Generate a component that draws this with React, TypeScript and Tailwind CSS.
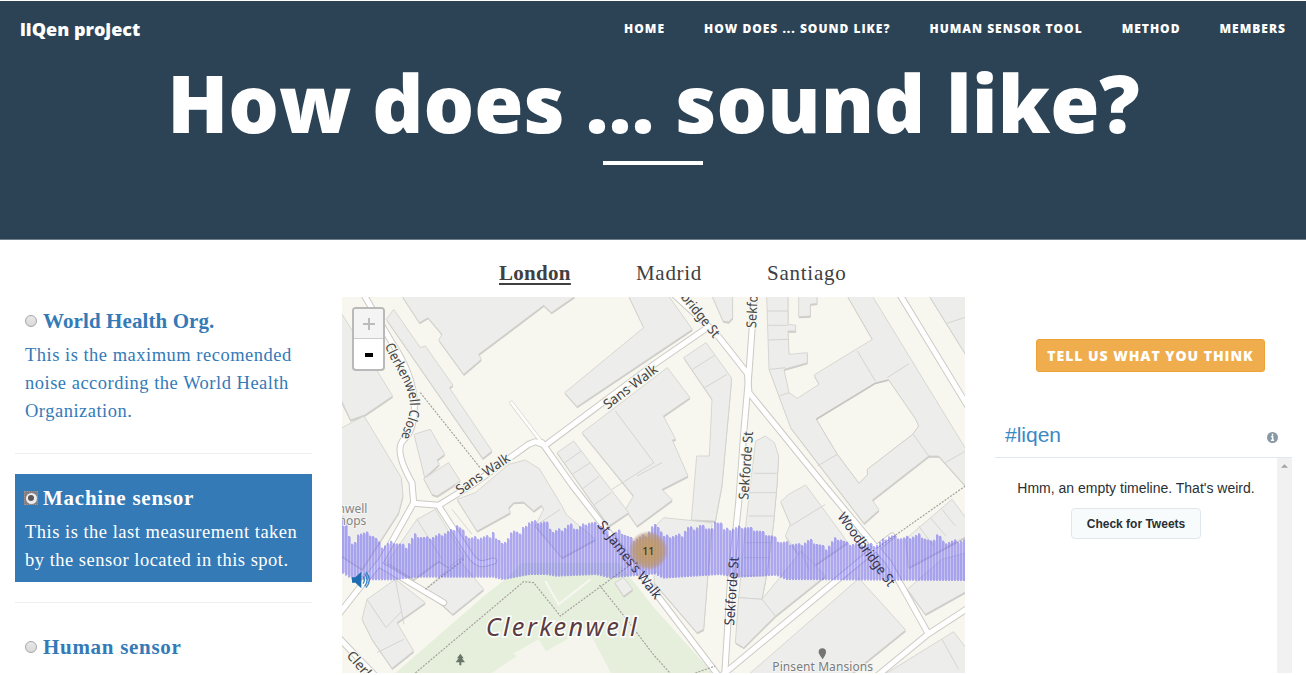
import React from "react";

const pts = {
  buildings: [
    "180,0 232,80 258,65 300,115 290,132 365,235 418,190 410,175 605,28 628,50 700,0",
    "860,0 905,95 668,290 705,332 1051,100 980,0",
    "133,70 155,40 235,155 250,150 333,268 322,275 450,465 422,487",
    "-9,40 152,300 68,357 25,372 -9,305",
    "-9,400 66,360 178,545 183,600 170,650 60,820 -9,775",
    "216,415 265,400 308,475 285,492 292,505 248,545",
    "245,548 320,500 355,555 285,600 270,595",
    "720,410 976,215 1044,305 964,360 1001,430 991,432 1038,540 960,580 991,612 885,690 850,640 875,600",
    "645,470 695,435 860,650 800,690",
    "400,590 500,505 550,492 592,518 660,630 672,655 760,730 660,785 580,690 605,640 598,628 575,645 545,618 515,620 500,635 505,650 405,705 345,610",
    "225,670 280,640 365,780 320,815 290,795 215,850 135,800",
    "250,880 350,790 425,880 332,955",
    "75,910 160,850 250,920 165,980 215,1065 150,1117 90,1030 60,970",
    "818,860 845,845 872,880 845,900",
    "1110,0 1172,0 1172,65 1160,78 1143,75",
    "1370,0 1425,0 1425,22 1405,25 1405,60 1370,62",
    "1762,0 1875,0 1875,182",
    "1025,185 1092,140 1168,245 1168,260 1140,567 1120,675 1048,672 1064,480 1102,480 1110,310",
    "1241,435 1270,420 1297,440 1310,480 1305,567 1295,680 1275,830 1260,910 1190,905 1210,700 1225,567",
    "940,690 965,665 1110,680 1085,1000 1065,1010 936,860",
    "1316,617 1340,595 1391,567 1500,715 1516,740 1400,820 1330,720 1345,685",
    "1190,905 1260,910 1378,765 1450,840 1300,960 1205,1055 1180,1040",
    "1215,1140 1551,847 1691,1002 1520,1140",
    "1696,880 1750,955 1875,885 1875,770 1800,790",
    "1690,730 1830,610 1875,670 1875,720 1700,815",
    "1620,1140 1835,1007 1875,1060 1875,1140",
    "1274,0 1338,0 1338,85 1361,88 1361,105 1338,105 1341,175 1396,170 1396,200 1326,220 1341,290 1366,307 1431,265 1416,237 1591,130 1516,0 1591,0 1875,465 1875,575 1790,480 1760,480 1591,612 1611,642 1566,682 1346,395 1281,220",
  ],
  courtyard:
    "1423,370 1600,262 1640,252 1720,368 1730,390 1712,415 1576,520 1576,537 1551,562 1486,475",
};

const partitions =
  "M668,500L718,465 M690,535L745,500 M722,578L772,540 M758,625L808,590 M1052,220L1118,178 M1088,275L1155,235 M1276,45H1338 M1276,88H1338 M1279,132L1340,130 M1283,220L1330,215 M1312,300L1341,290 M1546,165L1600,255 M1636,245L1701,203 M1714,415L1760,480 M1810,500L1869,466 M1426,510L1486,475 M820,345L936,500 M936,500L810,580 M885,540L960,500 M1236,532H1305 M1224,590H1304 M1220,660H1296 M1212,740H1288 M1206,785H1282 M1200,840H1272 M1815,82L1872,63 M75,910L132,995L180,945 M160,850L186,985 M105,1070L185,1030 M225,670L300,790 M1345,690L1450,625 M1400,820L1378,765 M1260,910L1300,960 M1730,690L1775,750 M1765,665L1812,720 M1800,640L1840,690 M1800,1030L1850,1120 M580,690L655,640 M330,640L390,715 M0,315L25,372";

const roads = [
  "M62,-10L150,140Q215,240 217,320T186,430T210,560L215,620L120,790L-10,955",
  "M215,622L290,628L400,560L560,445L580,437L610,448L936,205L1096,95",
  "M600,440L690,567L936,885L1130,1140",
  "M290,630L380,770Q400,805 425,803L455,795",
  "M112,805L305,920",
  "M990,-10L1120,110L1216,232L1221,290L1446,567L1640,800L1757,1010",
  "M1238,-10L1221,230L1206,400L1190,620L1165,860L1148,1140",
  "M1670,-10L1880,335",
  "M1140,1138L1576,777L1650,720",
  "M1600,1144L1757,1015L1880,935",
  "M-10,1025L110,1150",
];

const topKeys: [number, number][] = [
  [0, 100], [15, 110], [20, 180], [40, 175], [45, 145], [75, 145], [95, 155], [115, 185], [150, 170], [190, 185], [215, 150],
  [250, 160], [290, 150], [330, 135], [342, 120], [380, 160], [440, 155], [450, 140], [462, 170], [490, 170], [515, 130],
  [530, 150], [545, 122], [560, 110], [610, 112], [630, 140], [660, 132], [680, 118], [700, 132], [735, 112], [770, 118],
  [800, 150], [830, 138], [870, 165], [910, 150], [930, 122], [948, 122], [960, 155], [1020, 150], [1030, 128], [1055, 130],
  [1070, 122], [1112, 133], [1118, 107], [1134, 112], [1142, 135], [1200, 125], [1240, 135], [1290, 155], [1310, 170],
  [1370, 180], [1400, 165], [1450, 190], [1475, 162], [1490, 160], [1510, 175], [1600, 180], [1640, 152], [1680, 160],
  [1730, 150], [1765, 172], [1785, 143], [1800, 172], [1869, 165],
];
const bottomKeys: [number, number][] = [
  [0, 266], [30, 285], [150, 286], [220, 278], [450, 278], [480, 285], [560, 270], [610, 270], [640, 275], [760, 270],
  [800, 280], [936, 268], [960, 281], [1050, 275], [1130, 270], [1180, 278], [1300, 272], [1330, 285], [1869, 288],
];

function sample(keys: [number, number][], x: number) {
  for (let i = 1; i < keys.length; i++) {
    if (x <= keys[i][0]) {
      const [x0, y0] = keys[i - 1];
      const [x1, y1] = keys[i];
      return y0 + ((y1 - y0) * (x - x0)) / (x1 - x0);
    }
  }
  return keys[keys.length - 1][1];
}

const bars = Array.from({ length: 208 }, (_, i) => {
  const x = i * 9;
  const jitter = (i * 7) % 4;
  const top = 567 + sample(topKeys, x) + jitter * 3 - 5;
  return { x, top, h: 567 + sample(bottomKeys, x) - top };
});

type RoadLabelProps = { x: number; y: number; angle: number; length: number; children: string; end?: boolean };

function RoadLabel({ x, y, angle, length, children, end }: RoadLabelProps) {
  return (
    <text
      transform={`translate(${x} ${y}) rotate(${angle})`}
      textLength={length}
      lengthAdjust="spacingAndGlyphs"
      textAnchor={end ? "end" : "start"}
      className="fill-[#444444] stroke-[#f7f7f1] stroke-[7] text-[41px] [paint-order:stroke]"
    >
      {children}
    </text>
  );
}

function StreetMap() {
  return (
    <svg viewBox="0 3 1869 1128" className="block h-[376px] w-[623px] bg-[#f7f7ef] font-['Noto_Sans',sans-serif]">
      <defs>
        <radialGradient id="marker">
          <stop offset="0" stopColor="#c69a55" stopOpacity="0.9" />
          <stop offset="0.6" stopColor="#be9560" stopOpacity="0.8" />
          <stop offset="0.82" stopColor="#b8926c" stopOpacity="0.6" />
          <stop offset="1" stopColor="#b08c90" stopOpacity="0" />
        </radialGradient>
        <path id="close" d="M128,148C155,215 198,262 203,318S180,390 179,425" />
      </defs>
      <polygon points="150,1140 420,905 490,850 540,800 830,800 936,935 1120,1140" fill="#e6eedc" />
      <polygon points="435,1140 525,1080 513,1073 590,1030 612,1066 735,995 812,1140" fill="#f5f5ee" />
      <path d="M610,855L650,925L745,850" fill="none" stroke="#f5f7f0" strokeWidth="7" />
      {pts.buildings.map((p) => (
        <g key={p}>
          <polygon points={p} fill="#cdccc9" transform="translate(1 5)" />
          <polygon points={p} fill="#ededec" stroke="#d2d1cc" strokeWidth="2.5" />
        </g>
      ))}
      <polygon points={pts.courtyard} fill="#f7f7ef" stroke="#cfcec9" strokeWidth="3" />
      <path d="M1423,370L1600,262L1640,252" fill="none" stroke="#c6c5c1" strokeWidth="5" />
      <path d={partitions} fill="none" stroke="#d0cfcb" strokeWidth="2.5" />
      <g fill="none" strokeLinejoin="round" strokeLinecap="round">
        <path d="M508,320L600,440" stroke="#d4d3cc" strokeWidth="12" />
        {roads.map((d) => (
          <path key={d} d={d} stroke="#cbcac5" strokeWidth="21" />
        ))}
        <path d="M508,320L600,440" stroke="#ffffff" strokeWidth="8" />
        {roads.map((d) => (
          <path key={d} d={d} stroke="#ffffff" strokeWidth="15" />
        ))}
      </g>
      <g fill="none" stroke="#a5a09c" strokeWidth="3.5" strokeDasharray="6 4">
        <path d="M235,290L418,520" />
        <path d="M220,1131L545,857L575,860L655,960L860,810 M772,867L850,965L936,1078L1010,1160" />
        <path d="M1870,570L1600,760" />
        <path d="M250,880L365,790 M1060,1131L1120,1110" />
      </g>

      <g fill="#6258ee">
        {bars.map((b) => (
          <g key={b.x}>
            <rect x={b.x} y={b.top} width="6" height={b.h} fillOpacity="0.5" />
            <rect x={b.x + 6} y={b.top + 3} width="3" height={b.h - 6} fillOpacity="0.3" />
          </g>
        ))}
      </g>

      <RoadLabel x={797} y={341} angle={-37} length={192}>Sans Walk</RoadLabel>
      <RoadLabel x={353} y={597} angle={-34} length={186}>Sans Walk</RoadLabel>
      <RoadLabel x={1219} y={612} angle={-86} length={206}>Sekforde St</RoadLabel>
      <RoadLabel x={1242} y={97} angle={-87} length={206}>Sekforde St</RoadLabel>
      <RoadLabel x={1115} y={128} angle={51} length={262} end>Woodbridge St</RoadLabel>
      <g className="[&_text]:fill-[#33334f] [&_text]:stroke-0">
        <RoadLabel x={1176} y={989} angle={-86} length={206}>Sekforde St</RoadLabel>
        <RoadLabel x={1485} y={662} angle={54} length={262}>Woodbridge St</RoadLabel>
        <RoadLabel x={764} y={688} angle={52} length={285}>St James’s Walk</RoadLabel>
      </g>
      <RoadLabel x={12} y={1080} angle={49} length={98}>Clerk</RoadLabel>
      <text className="fill-[#444444] stroke-[#f7f7f1] stroke-[7] text-[41px] [paint-order:stroke]">
        <textPath href="#close" textLength="300" lengthAdjust="spacingAndGlyphs">
          Clerkenwell Close
        </textPath>
      </text>
      <g className="fill-[#858585] stroke-[#f4f4f2] stroke-[6] text-[36px] [paint-order:stroke]">
        <text x="76" y="650" textAnchor="end">nwell</text>
        <text x="73" y="688" textAnchor="end">hops</text>
        <text x="1291" y="1125" textLength="302" className="fill-[#7c7c7c]">Pinsent Mansions</text>
      </g>

      <circle cx="919" cy="764" r="60" fill="url(#marker)" />
      <text x="919" y="776" textAnchor="middle" className="fill-[#3c3434] text-[32px] font-medium">
        11
      </text>

      <text
        x="431"
        y="1021"
        textLength="453"
        className="fill-[#5b3c40] stroke-white stroke-[9] font-['Noto_Sans','Open_Sans',sans-serif] text-[76px] italic [paint-order:stroke]"
      >
        Clerkenwell
      </text>
      <path d="M355,1073l10,14h-5l9,12h-11v9h-6v-9h-11l9,-12h-5z" fill="#6a756a" />
      <path d="M1442,1090c-9,-14 -12,-17 -12,-22a11,11 0 0 1 22,0c0,5 -2,10 -10,22z" fill="#757575" />

      <g transform="translate(30 829)">
        <path d="M0,15h10l18,-17v50l-18,-17h-10z" fill="#1f6cb0" />
        <path d="M33,12q8,11 0,22 M38,4q15,19 0,38 M42,-1q20,24 0,47" fill="none" stroke="#3a86c4" strokeWidth="4" />
      </g>
    </svg>
  );
}

const serif = "font-['Liberation_Serif',serif]";

function Radio({ checked = false }: { checked?: boolean }) {
  if (checked) {
    return (
      <span className="-ml-px mr-[-1px] flex size-[14px] shrink-0 items-center justify-center border border-dotted border-[#b48a80] bg-[#7f7f88]">
        <span className="flex size-[11px] items-center justify-center rounded-full bg-[#ececec]">
          <span className="size-[6px] rounded-full bg-[#5c5757]" />
        </span>
      </span>
    );
  }
  return (
    <span className="size-3 shrink-0 rounded-full border border-[#a5a5a5] bg-linear-to-b from-[#e9e9e9] to-[#d9d9d9]" />
  );
}

type SensorProps = { title: string; titleClass: string; lines: string[]; checked?: boolean };

function Sensor({ title, titleClass, lines, checked }: SensorProps) {
  return (
    <div className={`${serif} px-[10px] pb-2 ${checked ? "bg-[#337ab7] text-white" : "text-[#337ab7]"}`}>
      <div className="flex h-11 items-center gap-[6px] pt-1">
        <Radio checked={checked} />
        <h4 className={`whitespace-nowrap text-[21px] font-bold leading-7 ${titleClass}`}>{title}</h4>
      </div>
      {lines.map((l) => (
        <p key={l} className="whitespace-nowrap text-[18.5px] leading-7 tracking-[0.5px]">{l}</p>
      ))}
    </div>
  );
}

export default function App() {
  return (
    <div className="h-[675px] w-[1306px] overflow-hidden bg-white pt-px">
      <header className="h-[239px] border-b border-[#6d7d89] bg-[#2c4356] text-white font-['Open_Sans',sans-serif]">
        <nav className="flex h-14 items-center justify-between px-5">
          <span className="text-[18px] font-extrabold">liQen project</span>
          <ul className="flex gap-[39px] text-[12px] font-extrabold tracking-[1px]">
            <li>HOME</li>
            <li>HOW DOES ... SOUND LIKE?</li>
            <li>HUMAN SENSOR TOOL</li>
            <li>METHOD</li>
            <li>MEMBERS</li>
          </ul>
        </nav>
        <h1 className="-mt-[9px] whitespace-nowrap pl-px text-center text-[79.7px] font-extrabold leading-[108px]">
          How does ... sound like?
        </h1>
        <div className="mx-auto mt-[5px] h-1 w-[100px] bg-white" />
      </header>

      <div className="flex h-[433px] overflow-hidden">
        <aside className="ml-[15px] w-[297px] shrink-0 pt-[57px]">
          <Sensor
            title="World Health Org."
            titleClass="tracking-[0.1px]"
            lines={["This is the maximum recomended", "noise according the World Health", "Organization."]}
          />
          <hr className="my-5 border-[#eeeeee]" />
          <Sensor
            checked
            title="Machine sensor"
            titleClass="tracking-[0.75px]"
            lines={["This is the last measurement taken", "by the sensor located in this spot."]}
          />
          <hr className="my-5 border-[#eeeeee]" />
          <Sensor title="Human sensor" titleClass="tracking-[0.7px]" lines={[]} />
        </aside>

        <main className="ml-[30px] w-[623px] shrink-0">
          <div className={`flex h-[57px] items-center gap-[65px] pl-[157px] pt-[11px] text-[21px] text-[#404040] ${serif}`}>
            <span className="w-[72px] whitespace-nowrap font-bold tracking-[0.3px] underline decoration-2 underline-offset-[3px]">London</span>
            <span className="w-[66px] whitespace-nowrap tracking-[0.7px]">Madrid</span>
            <span className="whitespace-nowrap tracking-[0.75px]">Santiago</span>
          </div>
          <div className="relative">
            <StreetMap />
            <div className="absolute left-[10px] top-[10px] h-[64px] w-[33px] overflow-hidden rounded-[4px] border-2 border-[#b9b9b9] bg-white">
              <div className="flex h-[30px] items-center justify-center border-b border-[#cccccc] bg-[#f4f4f4]">
                <svg viewBox="0 0 12 12" className="size-3"><path d="M6,0V12M0,6H12" stroke="#bbbbbb" strokeWidth="2" /></svg>
              </div>
              <div className="flex h-[31px] items-center justify-center">
                <span className="h-1 w-2 bg-black" />
              </div>
            </div>
          </div>
        </main>

        <aside className="ml-[30px] w-[297px] shrink-0 pt-[99px] font-['Liberation_Sans',sans-serif]">
          <button className="ml-[41px] flex h-[33px] w-[229px] items-center justify-center whitespace-nowrap rounded-[3px] border border-[#eea236] bg-[#f0ad4e] font-['Open_Sans',sans-serif] text-[14px] font-extrabold tracking-[0.95px] text-white">
            TELL US WHAT YOU THINK
          </button>
          <div className="mt-[40px] flex h-[46px] items-center justify-between border-b border-[#e1e8ed] pl-[10px] pr-[14px]">
            <h2 className="text-[21px] font-normal text-[#3b88c3]">#liqen</h2>
            <svg viewBox="0 0 12 12" className="mt-[5px] size-[11px]">
              <circle cx="6" cy="6" r="6" fill="#8899a6" />
              <path d="M6,2v2M4.5,5.2H6.2V9M4.3,9H7.8" stroke="white" strokeWidth="1.5" fill="none" />
            </svg>
          </div>
          <div className="flex h-[217px]">
            <div className="flex flex-1 flex-col items-center pt-[20px]">
              <p className="whitespace-nowrap text-[14px] leading-5 text-[#292f33]">Hmm, an empty timeline. That's weird.</p>
              <button className="mt-[10px] h-[31px] w-[130px] whitespace-nowrap rounded-[4px] border border-[#e1e8ed] bg-[#f8fbfb] text-[12px] font-bold text-[#292f33]">
                Check for Tweets
              </button>
            </div>
            <div className="flex w-[15px] justify-center bg-[#f1f1f1] pt-[6px]">
              <svg viewBox="0 0 8 4" className="h-1 w-[7px]"><path d="M0,4L4,0L8,4z" fill="#a3a3a3" /></svg>
            </div>
          </div>
        </aside>
      </div>
    </div>
  );
}
